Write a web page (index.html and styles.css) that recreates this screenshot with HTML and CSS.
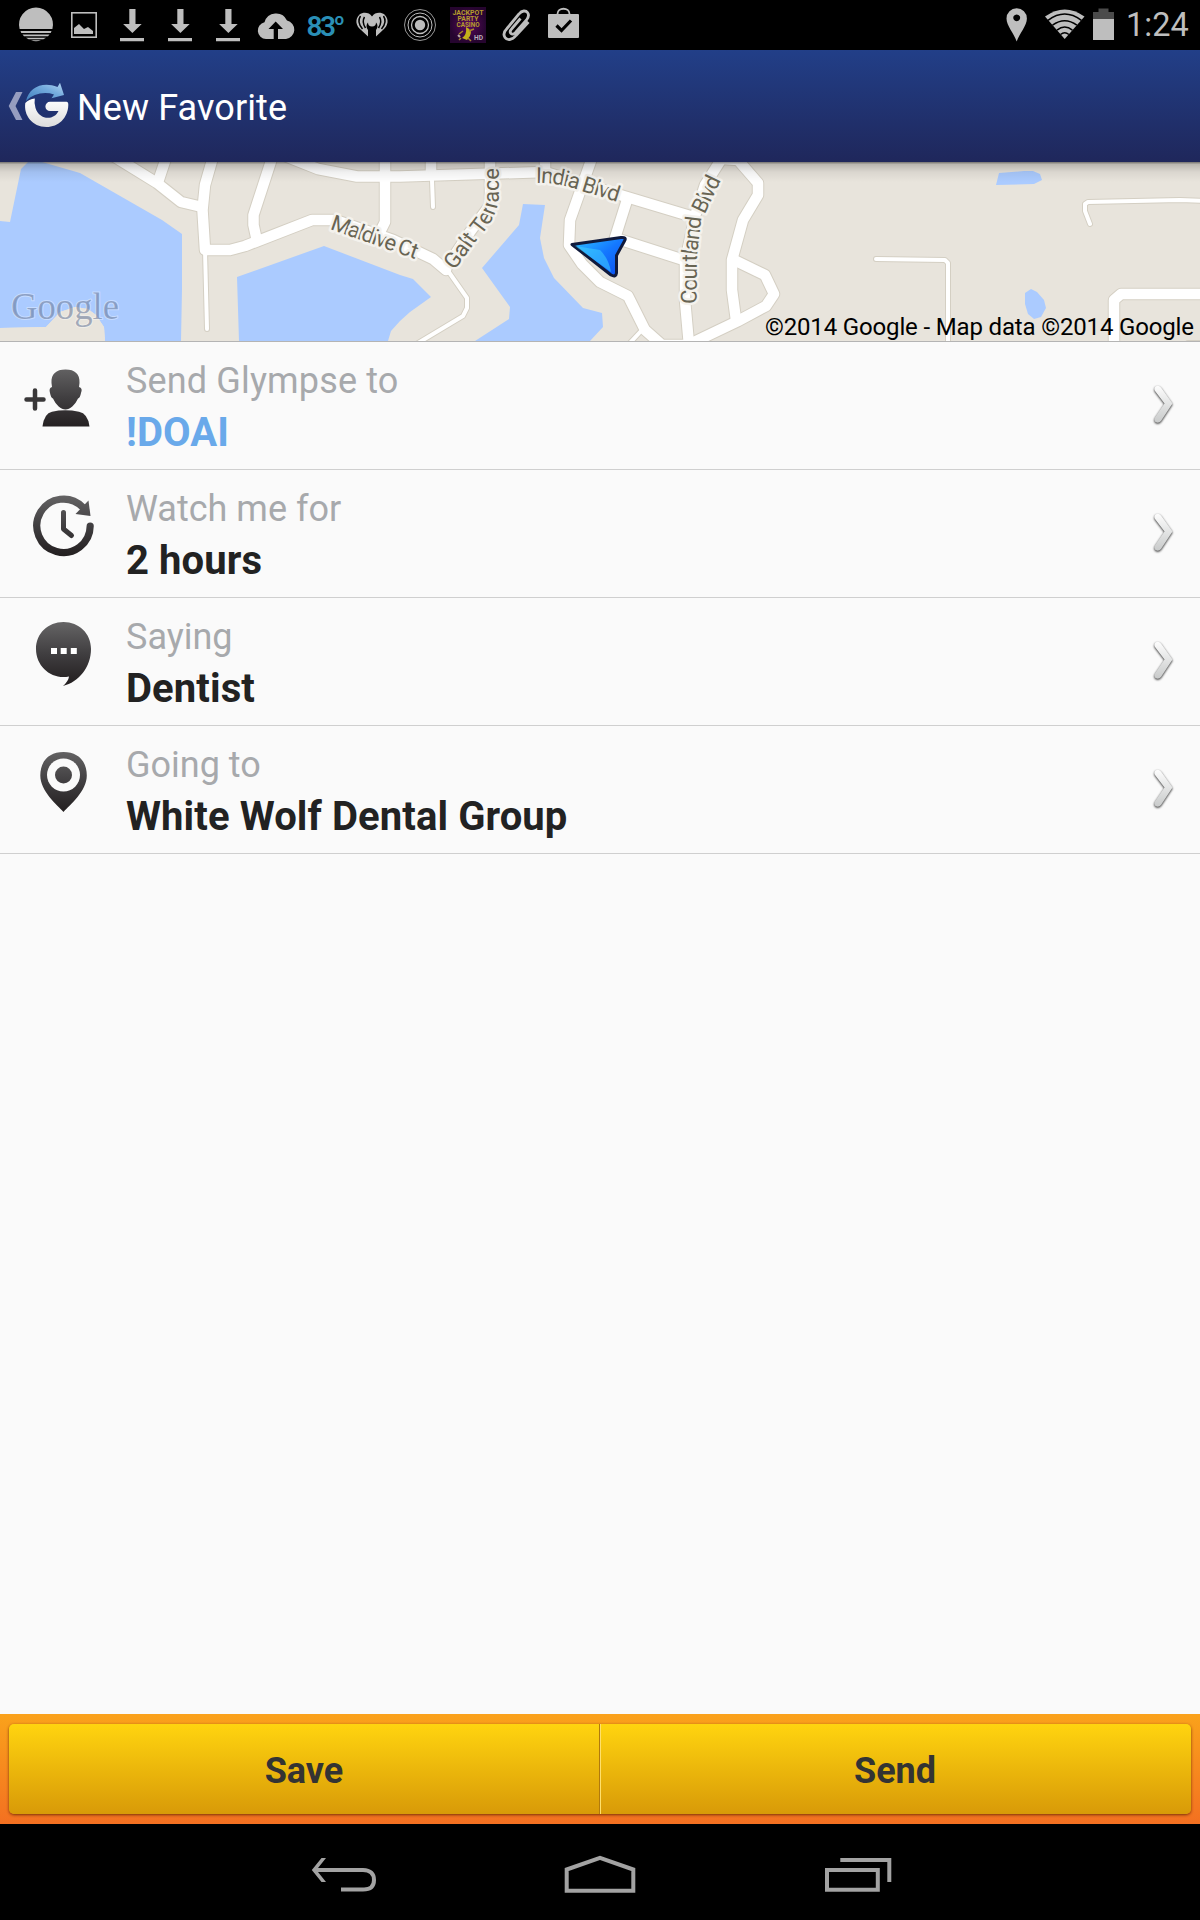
FILE: index.html
```html
<!DOCTYPE html>
<html lang="en">
<head>
    <meta charset="UTF-8">
    <meta name="viewport" content="width=device-width, initial-scale=1.0">
    <title>New Favorite</title>
    <link rel="stylesheet" href="styles.css">
</head>
<body>
    <div class="statusBar">
        <div class="notifications">
            <svg width="48" height="50" viewBox="0 0 48 50">
                <path d="M7.6 29A17 17 0 1 1 40.4 29Z"/>
                <path d="M8.5 31h31l-.8 2H9.3ZM10.5 34.5h27l-1.5 1.8H12ZM14 37.7h20l-2.6 1.5H16.6ZM19 40.3h10q-5 2-10 0Z"/>
            </svg>
            <svg width="48" height="50" viewBox="0 0 48 50">
                <rect class="line" x="11.8" y="12.8" width="24.4" height="24.4" stroke-width="1.6"/>
                <path d="M14 34v-6l5-4 5 5 4-2 5 4v3Z"/>
            </svg>
            <svg width="48" height="50" viewBox="0 0 48 50"><path d="M21.3 9h6.2v15h6.2l-9.3 9-9.3-9h6.2ZM12 38h24v3.2H12Z"/></svg>
            <svg width="48" height="50" viewBox="0 0 48 50"><path d="M21.3 9h6.2v15h6.2l-9.3 9-9.3-9h6.2ZM12 38h24v3.2H12Z"/></svg>
            <svg width="48" height="50" viewBox="0 0 48 50"><path d="M21.3 9h6.2v15h6.2l-9.3 9-9.3-9h6.2ZM12 38h24v3.2H12Z"/></svg>
            <svg width="48" height="50" viewBox="0 0 48 50">
                <path d="M14 39a8.500 8.500 0 0 1-1.500-16.800A12 12 0 0 1 35 20.500a9.400 9.400 0 0 1-1 18.500h-8V29h5l-7.300-7.500L16.500 29h5.200v10Z"/>
            </svg>
            <span class="temp">83<span class="degree">o</span></span>
            <svg width="48" height="50" viewBox="0 0 48 50">
                <path d="M24 16.500c3-4.500 9-4.500 12.500-2 5 5 3.500 11-1 15L28 36.500V30a5.500 5.500 0 1 0-8 0v6.500L12.500 29.500c-4.500-4-6-10-1-15C15 12 21 12 24 16.500Z"/>
                <circle cx="24" cy="22.500" r="4"/>
                <path class="dark" d="M16.500 17q-3 5 1 11M12.500 16q-4 6 2 13M31.500 17q3 5-1 11M35.500 16q4 6-2 13"/>
            </svg>
            <svg width="48" height="50" viewBox="0 0 48 50">
                <circle cx="24" cy="25" r="5.200"/>
                <circle class="line" cx="24" cy="25" r="8.500" stroke-width="1.300"/>
                <circle class="line" cx="24" cy="25" r="12" stroke-width="1"/>
                <circle class="line" cx="24" cy="25" r="15.500" stroke-width=".8"/>
            </svg>
            <svg width="48" height="50" viewBox="0 0 48 50">
                <defs>
                    <radialGradient id="casino"><stop offset="0" stop-color="#5c0a60"/><stop offset="1" stop-color="#26052f"/></radialGradient>
                </defs>
                <rect x="6" y="7" width="36" height="36" fill="url(#casino)"/>
                <g class="casinoText">
                    <text x="24" y="15" textLength="31" lengthAdjust="spacingAndGlyphs">JACKPOT</text>
                    <text x="24" y="21" textLength="21" lengthAdjust="spacingAndGlyphs">PARTY</text>
                    <text x="24" y="27" textLength="23" lengthAdjust="spacingAndGlyphs">CASINO</text>
                    <text class="hd" x="34.500" y="39.500" textLength="9" lengthAdjust="spacingAndGlyphs">HD</text>
                </g>
                <path d="M22 27q7 3 4 9l-3 4-5-2q5-3 4-11Z" fill="#c4b01a"/>
                <path d="M19 31l-4 3m2 4l-2 2m9-2l3 3m-2-10l5-2" fill="none" stroke="#a8882b" stroke-width="1.500"/>
                <path d="M14 35l2 2" stroke="#b9a9a9" stroke-width="2"/>
            </svg>
            <svg width="48" height="50" viewBox="0 0 48 50">
                <path class="line" stroke-width="2.800" d="M36.500 22L24 35.500c-4 5-9 5-11 2-2-3-1-6 2-9L27 14c3-4 7-3.500 8.500-1.500s1 5-1 7.500L24 32c-2 2.500-4 2.500-5 1.500s-1-3 1-5l8.500-10"/>
            </svg>
            <svg width="48" height="50" viewBox="0 0 48 50">
                <rect x="8" y="14" width="31" height="24" rx="1"/>
                <path class="line" stroke-width="1.800" d="M17.500 14c0-7 12-7 12 0"/>
                <path d="M16.500 25.500l5 5 9.500-10" fill="none" stroke="#000" stroke-width="3.200"/>
            </svg>
        </div>
        <div class="system">
            <svg width="34" height="50" viewBox="1000 0 34 50">
                <path fill-rule="evenodd" d="M1016.700 41.500C1014 33 1006.500 26 1006.500 18.500a10.200 10.200 0 0 1 20.400 0C1026.900 26 1019.500 33 1016.700 41.500ZM1016.700 14.400a3.400 3.400 0 1 0 .01 0Z"/>
            </svg>
            <svg width="52" height="50" viewBox="1038 0 52 50">
                <path d="M1064.700 39L1045 16.500Q1064.700 2.500 1084.500 16.500Z"/>
                <path d="M1048 21.800q16.700-12.500 33.400 0M1052.500 26.700q12.200-9 24.400 0M1057 31.600q7.700-6 15.400 0M1060.500 36q4.200-3.500 8.400 0" transform="translate(0 -1.500)" fill="none" stroke="#000" stroke-width="1.500"/>
            </svg>
            <svg width="30" height="50" viewBox="1088 0 30 50">
                <path fill="#4b4b4b" d="M1093 12h5.500V8.500h10V12h5.500v8h-21Z"/>
                <path d="M1093 19h21v21h-21Z"/>
            </svg>
            <span class="clock">1:24</span>
        </div>
    </div>

    <div class="header">
        <svg width="77" height="112" viewBox="0 50 77 112">
            <defs>
                <linearGradient id="logoWhite" x1="0" y1="0" x2="0" y2="1"><stop offset="0" stop-color="#fff"/><stop offset="1" stop-color="#dcdcdc"/></linearGradient>
                <linearGradient id="logoBlue" x1="0" y1="1" x2="1" y2="0"><stop offset="0" stop-color="#3f7fbd"/><stop offset=".6" stop-color="#74abdd"/><stop offset="1" stop-color="#b5d6f3"/></linearGradient>
            </defs>
            <path fill="#969dc0" d="M16 92h6.500L15.500 106l7 14H16L8.700 106Z"/>
            <path fill="url(#logoWhite)" d="M25.300 103Q29 99 34.800 98.500Q34 103 35.500 108C39 120 54 121 58.500 111H50a4.600 4.600 0 0 1 0-9.200H66.500Q68.500 102 68.300 105C68 118 58.500 127 46.500 127C32 127 23.500 115 25.300 103Z"/>
            <path fill="url(#logoBlue)" d="M26 101C29 87 43 81 57.500 87L60 82.800L64 95L51.500 98.300L54 94.500C44 91 33 94 26 101Z"/>
        </svg>
        <h1>New Favorite</h1>
    </div>

    <svg class="map" width="1200" height="179" viewBox="0 162 1200 179">
        <defs>
            <linearGradient id="shade" x1="0" y1="0" x2="0" y2="1">
                <stop offset="0" stop-color="#000" stop-opacity=".5"/>
                <stop offset=".12" stop-color="#000" stop-opacity=".2"/>
                <stop offset=".5" stop-color="#000" stop-opacity=".06"/>
                <stop offset="1" stop-color="#000" stop-opacity="0"/>
            </linearGradient>
            <linearGradient id="pointer" x1="0" y1="0" x2="1" y2="1"><stop offset="0" stop-color="#2ec4ff"/><stop offset=".5" stop-color="#1478ff"/><stop offset="1" stop-color="#0a4cf0"/></linearGradient>
            <path id="maldive" d="M329.500 229L418 260"/>
            <path id="galt" d="M454.500 270.500L476 241Q497 219 498.800 198V160"/>
            <path id="india" d="M536 183Q559 182.500 582 191L625 204.500"/>
            <path id="courtland" d="M696.500 304L697 255L701 222L724 174"/>

            <g id="wideRoads">
                <path d="M110 154L157 183L181 202L202 207"/>
                <path d="M167 155L158 182"/>
                <path d="M215 150L205 185L202.500 210L205 250H230L245 246L312 220H335L393 240L433 259L446 270"/>
                <path d="M273 155L253.500 215V225L257 241"/>
                <path d="M280 154L318 169L357 176.500H400L545 172L620 195L690 216"/>
                <path d="M385 155V222L378 236M431 155V175M545 155V172"/>
                <path d="M490 155V205L470 232L446 268"/>
                <path d="M593 155L570 220L569 245L582 264L600 282L628 296L645 330L662 345H690"/>
                <path d="M627 200L615 238L690 262"/>
                <path d="M724 155L705 185L695 216L685 262V300L689 345"/>
                <path d="M724 159L738 160L758 183V195L743 220L732 260V290L736 320"/>
                <path d="M734 260L765 275L774 294L766 306L738 321L690 344"/>
                <path d="M1114 345V300L1121 294H1210"/>
            </g>
            <g id="thinRoads">
                <path d="M205 250L207 329M432 180L433 207"/>
                <path d="M446 268L467 298V308L463 316L418 343M642 330L628 345"/>
                <path d="M876 259L945 260L948 263V345"/>
                <path d="M1090 224L1085 211V204L1088 202L1180 200L1210 201"/>
                <path d="M1188 343H1205"/>
            </g>
        </defs>
        <rect class="land" y="162" width="1200" height="179"/>
        <g class="water">
            <path d="M0 221L10 222L21 169L28 162H42L80 173L162 220L182 234V289L181 341H105L104 327L96 315L88 309L75 307L60 312L46 327L0 328Z"/>
            <path d="M237 277L324 246L400 275L413 279L431 297L410 312L400 321L391 331L388 341H239Z"/>
            <path d="M523 204L545 205L540 238L544 258L554 278L583 308L602 313L603 327L590 341H475L509 319L510 307L482 268L519 225Z"/>
            <path d="M996 185L999 173L1024 171H1033L1040 174L1042 180L1034 184Z"/>
            <path d="M1025 293L1031 289L1037 292L1044 300L1046 308L1041 317L1034 319L1028 314L1025 304Z"/>
        </g>
        <path class="land" d="M46 327L60 312L75 307L88 309L96 315L104 327L105 341H0V328Z"/>
        <use href="#thinRoads" class="casing thinCasing"/>
        <use href="#wideRoads" class="casing"/>
        <use href="#thinRoads" class="road thin"/>
        <use href="#wideRoads" class="road"/>

        <g class="streets">
            <text textLength="91"><textPath href="#maldive">Maldive Ct</textPath></text>
            <text textLength="116"><textPath href="#galt">Galt Terrace</textPath></text>
            <text textLength="84"><textPath href="#india">India Blvd</textPath></text>
            <text textLength="129"><textPath href="#courtland">Courtland Blvd</textPath></text>
        </g>
        <text class="googleLogo" x="11" y="319" textLength="108" lengthAdjust="spacingAndGlyphs">Google</text>
        <path d="M572 244.500L621 237.500Q627 237 624.500 241L616.500 255.500L616.500 273Q616 277.500 611 275Z" fill="url(#pointer)" stroke="#101a3c" stroke-width="3" stroke-linejoin="round"/>
        <path d="M575 246L600 250Q609 259 611 272Z" fill="#3fd0ff" opacity=".55"/>
        <text class="credit" x="765" y="335" textLength="429">©2014 Google - Map data ©2014 Google</text>
        <rect y="162" width="1200" height="20" fill="url(#shade)"/>
    </svg>

    <svg class="defs" width="0" height="0">
        <defs>
            <linearGradient id="ink" gradientUnits="userSpaceOnUse" x1="0" y1="26" x2="0" y2="86"><stop offset="0" stop-color="#636263"/><stop offset=".5" stop-color="#403e40"/><stop offset="1" stop-color="#231f20"/></linearGradient>
            <linearGradient id="silver" x1="0" y1="0" x2="0" y2="1"><stop offset="0" stop-color="#fdfdfd"/><stop offset="1" stop-color="#c8caca"/></linearGradient>
            <path id="chevron" d="M5.500 3.500Q8.500 1.500 11 4.500L22.500 20.500L11 38Q8.500 41 5.500 39Q3.500 37 5 34.500L14.500 20.500L5 8Q3.500 5.500 5.500 3.500Z"/>
        </defs>
    </svg>

    <div class="options">
        <div class="option">
            <svg class="icon" width="126" height="127" viewBox="0 0 126 127">
                <path class="plus" d="M26.500 57.500H43.500M35 48.500V66.500"/>
                <path class="ink" d="M65.500 27.500C75 27.500 80 32 79.500 41L79 45Q83 46 81 51Q80 56 78 56.500C75 63 70 67.500 65.500 67.500C61 67.500 56 63 53 56.500Q51 56 50 51Q48.500 46 52 45L51.500 41C51 32 56 27.500 65.500 27.500Z"/>
                <path class="ink" d="M42.500 84.500Q44 71.500 52 69.700Q65 67 79 69.700Q88 71.500 89.500 84.500Z"/>
            </svg>
            <div class="text">
                <div class="label wide">Send Glympse to</div>
                <div class="value link">!DOAI</div>
            </div>
            <svg class="arrow" width="27" height="43"><use href="#chevron"/></svg>
        </div>
        <div class="option">
            <svg class="icon" width="126" height="127" viewBox="0 0 126 127">
                <path class="inkLine" stroke-width="7.200" stroke-linecap="round" d="M90.200 56A26.700 26.700 0 1 1 82.500 37"/>
                <path class="ink" d="M88.500 30.500L90.500 46L75.500 44Z"/>
                <path class="inkLine" stroke-width="5" stroke-linecap="round" stroke-linejoin="round" d="M63.500 42.500V59L71.500 65.500"/>
            </svg>
            <div class="text">
                <div class="label">Watch me for</div>
                <div class="value">2 hours</div>
            </div>
            <svg class="arrow" width="27" height="43"><use href="#chevron"/></svg>
        </div>
        <div class="option">
            <svg class="icon" width="126" height="127" viewBox="0 0 126 127">
                <path class="ink" d="M63.500 24C79 24 91 35.500 91 51C91 69 79 84 63 88Q68.500 83 69 78.500C52 82 36 69 36 51C36 35.500 48 24 63.500 24Z"/>
                <path fill="#fff" d="M51 50h6v6h-6ZM60.700 50h6v6h-6ZM70.800 50h6v6h-6Z"/>
            </svg>
            <div class="text">
                <div class="label">Saying</div>
                <div class="value">Dentist</div>
            </div>
            <svg class="arrow" width="27" height="43"><use href="#chevron"/></svg>
        </div>
        <div class="option">
            <svg class="icon" width="126" height="127" viewBox="0 0 126 127">
                <path class="ink" d="M63.500 86C57 79 40.300 65 40.300 49.500C40.300 35 49 26 63.500 26S86.800 35 86.800 49.500C86.800 65 70 79 63.500 86Z"/>
                <circle cx="63.500" cy="49" r="16.500" fill="#fafafa"/>
                <circle class="ink" cx="63.500" cy="49" r="8.500"/>
            </svg>
            <div class="text">
                <div class="label">Going to</div>
                <div class="value">White Wolf Dental Group</div>
            </div>
            <svg class="arrow" width="27" height="43"><use href="#chevron"/></svg>
        </div>
    </div>

    <div class="footer">
        <div class="buttons">
            <button>Save</button>
            <button>Send</button>
        </div>
    </div>

    <div class="navBar">
        <svg width="66" height="40" viewBox="310 1855 66 40"><path d="M326 1858H321.500L311.800 1870L321.500 1882H326L318 1872H363Q372 1872 372 1880T363 1887.500H341V1891.500H363Q376 1891.500 376 1880T363 1868H318Z"/></svg>
        <svg width="74" height="44" viewBox="563 1852 74 44"><path class="navLine" d="M566.700 1889.800V1868.500L600 1856.800L633.300 1868.500V1889.800Z"/></svg>
        <svg width="70" height="40" viewBox="823 1855 70 40"><path class="navLine" d="M827 1870H877.800V1889.800H827ZM840.300 1860H889.300V1882"/></svg>
    </div>
</body>
</html>
```
FILE: styles.css
```css
*
{
    box-sizing: border-box;
}
body
{
    margin: 0;
    width: 1200px;
    height: 1920px;
    display: flex;
    flex-direction: column;
    background: #fafafa;
    font-family: Roboto, "Liberation Sans", sans-serif;
    overflow: hidden;
}
svg
{
    display: block;
    flex: none;
}
.statusBar
{
    display: flex;
    justify-content: space-between;
    height: 50px;
    padding-left: 12px;
    background: #000;
    color: #bebebe;
}
.statusBar svg
{
    fill: #bebebe;
}
.statusBar .line
{
    fill: none;
    stroke: #bebebe;
}
.statusBar .dark
{
    fill: none;
    stroke: #000;
    stroke-width: 1.5;
}
.notifications, .system
{
    display: flex;
}
.temp
{
    display: flex;
    justify-content: center;
    width: 48px;
    color: #2a8fb6;
    font-size: 28px;
    font-weight: 600;
    line-height: 53px;
    letter-spacing: -2.5px;
}
.degree
{
    margin-left: 1px;
    font-size: 17px;
    line-height: 38px;
}
.casinoText
{
    fill: #b59c2c;
    font-size: 6.5px;
    font-weight: 700;
    text-anchor: middle;
}
.casinoText .hd
{
    fill: #b9aebb;
}
.system
{
    width: 200px;
}
.system svg + svg
{
    margin-left: 4px;
}
.system svg + svg + svg
{
    margin-left: -2px;
}
.clock
{
    margin-left: 8px;
    font-size: 32.5px;
    line-height: 51px;
}
.header
{
    display: flex;
    height: 112px;
    background: linear-gradient(#223f88, #1f275b);
}
h1
{
    margin: 0;
    color: #fff;
    font-size: 36px;
    font-weight: 400;
    letter-spacing: .1px;
    line-height: 117px;
}
.map
{
    font-family: Roboto, sans-serif;
}
.land
{
    fill: #e8e4dc;
}
.water
{
    fill: #abcbff;
}
.casing, .road
{
    fill: none;
    stroke-linejoin: round;
    stroke-linecap: round;
}
.casing
{
    stroke: #d4cfc3;
    stroke-width: 12.5;
}
.road
{
    stroke: #fff;
    stroke-width: 10.5;
}
.thinCasing
{
    stroke-width: 6;
}
.thin
{
    stroke-width: 4;
}
.streets
{
    fill: #686453;
    font-size: 22px;
    stroke: #f4f2ed;
    stroke-width: 5px;
    stroke-linejoin: round;
    paint-order: stroke;
}
.googleLogo
{
    fill: #56688c;
    fill-opacity: .5;
    stroke: #fff;
    stroke-opacity: .35;
    stroke-width: 2px;
    paint-order: stroke;
    font-family: "Liberation Serif", serif;
    font-size: 37px;
}
.credit
{
    fill: #000;
    font-size: 24px;
}
.defs
{
    position: absolute;
}
.options
{
    flex: 1;
    border-top: 1px solid #b4b4b4;
}
.option
{
    display: flex;
    height: 128px;
    border-bottom: 1px solid #cfcfcf;
}
.ink
{
    fill: url(#ink);
}
.inkLine
{
    fill: none;
    stroke: url(#ink);
}
.plus
{
    stroke: #3a3839;
    stroke-width: 4.5;
    stroke-linecap: round;
}
.text
{
    flex: 1;
    padding-top: 17px;
    white-space: nowrap;
}
.label
{
    color: #a7a9ac;
    font-size: 36px;
    line-height: 44px;
}
.wide
{
    letter-spacing: .15px;
}
.value
{
    margin-top: 6px;
    color: #222;
    font-size: 40px;
    font-weight: 700;
    letter-spacing: .1px;
    line-height: 48px;
}
.link
{
    color: #69a9ea;
}
.arrow
{
    margin: 41px 23px 0 0;
    fill: url(#silver);
    filter: drop-shadow(0 1px 1px rgba(0, 0, 0, .85));
}
.footer
{
    height: 110px;
    padding: 10px 9px;
    background: linear-gradient(#faa21b, #f37021);
}
.buttons
{
    display: flex;
    height: 90px;
    border-radius: 5px;
    box-shadow: 0 1px 3px rgba(90, 30, 0, .8);
}
button
{
    width: 50%;
    padding: 4px 0 0;
    border: 0;
    background: linear-gradient(#ffd40f, #d89a08);
    color: #333;
    font: 700 36px Roboto, "Liberation Sans", sans-serif;
}
button:first-child
{
    border-right: 1px solid #b17a0b;
    border-radius: 5px 0 0 5px;
}
button:last-child
{
    padding-right: 2px;
    border-left: 1px solid #ffe06b;
    border-radius: 0 5px 5px 0;
}
.navBar
{
    display: flex;
    justify-content: space-between;
    align-items: center;
    height: 96px;
    padding: 5px 307px 0 310px;
    background: #000;
    fill: #a3a3a3;
}
.navLine
{
    fill: none;
    stroke: #a3a3a3;
    stroke-width: 4;
}
```
